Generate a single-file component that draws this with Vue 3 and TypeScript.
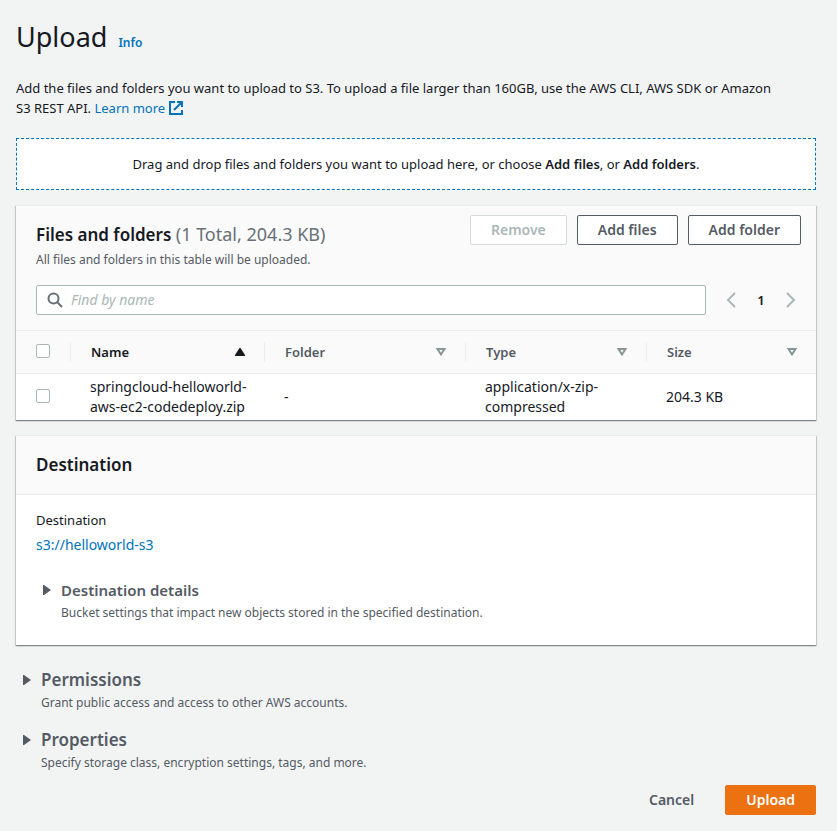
<script setup lang="ts">
import { computed, ref } from 'vue'

interface FileItem {
  name: string
  folder: string
  type: string
  size: string
}

interface Column {
  key: keyof FileItem
  label: string
}

const files: FileItem[] = [
  {
    name: 'springcloud-helloworld-aws-ec2-codedeploy.zip',
    folder: '-',
    type: 'application/x-zip-compressed',
    size: '204.3 KB',
  },
]

const columns: Column[] = [
  { key: 'name', label: 'Name' },
  { key: 'folder', label: 'Folder' },
  { key: 'type', label: 'Type' },
  { key: 'size', label: 'Size' },
]

const sections = [
  { title: 'Permissions', text: 'Grant public access and access to other AWS accounts.' },
  { title: 'Properties', text: 'Specify storage class, encryption settings, tags, and more.' },
]

const query = ref('')
const sortKey = ref<keyof FileItem>('name')
const selected = ref<string[]>([])

const visibleFiles = computed(() =>
  files
    .filter((f) => f.name.toLowerCase().includes(query.value.toLowerCase()))
    .sort((a, b) => a[sortKey.value].localeCompare(b[sortKey.value])),
)

function toggleAll(event: Event) {
  const checked = (event.target as HTMLInputElement).checked
  selected.value = checked ? files.map((f) => f.name) : []
}
</script>

<template>
  <main class="page">
    <header class="title-row">
      <h1>Upload</h1>
      <a class="info" href="#info">Info</a>
    </header>

    <p class="intro">
      Add the files and folders you want to upload to S3. To upload a file larger than 160GB, use the AWS CLI, AWS SDK or Amazon S3 REST API.
      <a class="link" href="#learn-more">Learn more
        <svg class="external" viewBox="0 0 14 14" aria-hidden="true">
          <path d="M6 1H1v12h12V9M8 1h5v5M13 1L5 9" />
        </svg></a>
    </p>

    <section class="dropzone">
      Drag and drop files and folders you want to upload here, or choose <b>Add files</b>, or <b>Add folders</b>.
    </section>

    <section class="card">
      <header class="card-head files-head">
        <div class="head-row">
          <div class="head-text">
            <h2>Files and folders <span class="counter">(1 Total, 204.3 KB)</span></h2>
            <p class="hint">All files and folders in this table will be uploaded.</p>
          </div>
          <div class="actions">
            <button class="btn" type="button" :disabled="!selected.length">Remove</button>
            <button class="btn" type="button">Add files</button>
            <button class="btn" type="button">Add folder</button>
          </div>
        </div>
        <div class="filter-row">
          <label class="search">
            <svg class="search-icon" viewBox="0 0 16 16" aria-hidden="true">
              <circle cx="6.5" cy="6.5" r="5" />
              <path d="M10 10L15 15" />
            </svg>
            <input v-model="query" type="text" placeholder="Find by name" aria-label="Find by name" />
          </label>
          <nav class="pager" aria-label="Pages">
            <button type="button" aria-label="Previous page">
              <svg viewBox="0 0 16 16"><path d="M12 1L5 8L12 15" /></svg>
            </button>
            <button class="current" type="button">1</button>
            <button type="button" aria-label="Next page">
              <svg viewBox="0 0 16 16"><path d="M4 1L11 8L4 15" /></svg>
            </button>
          </nav>
        </div>
      </header>

      <table>
        <colgroup>
          <col class="col-check" />
          <col class="col-name" />
          <col class="col-folder" />
          <col class="col-type" />
          <col />
        </colgroup>
        <thead>
          <tr>
            <th class="check">
              <input type="checkbox" aria-label="Select all files" :checked="selected.length === files.length" @change="toggleAll" />
            </th>
            <th v-for="col in columns" :key="col.key">
              <button class="sort" :class="{ active: sortKey === col.key }" type="button" @click="sortKey = col.key">
                {{ col.label }}
                <svg v-if="sortKey === col.key" class="sort-icon" viewBox="0 0 10 8" aria-hidden="true">
                  <path class="solid" d="M4.500 0h1L10 7v1H0V7z" />
                </svg>
                <svg v-else class="sort-icon" viewBox="0 0 10 8" aria-hidden="true">
                  <path class="hollow" d="M1.500 1h7L5 6.500z" />
                </svg>
              </button>
            </th>
          </tr>
        </thead>
        <tbody>
          <tr v-for="file in visibleFiles" :key="file.name">
            <td class="check">
              <input v-model="selected" type="checkbox" :value="file.name" :aria-label="`Select ${file.name}`" />
            </td>
            <td v-for="col in columns" :key="col.key">{{ file[col.key] }}</td>
          </tr>
        </tbody>
      </table>
    </section>

    <section class="card">
      <header class="card-head">
        <h2>Destination</h2>
      </header>
      <div class="card-body">
        <div class="field-label">Destination</div>
        <a class="link" href="#bucket">s3://helloworld-s3</a>
        <div class="expander nested">
          <button type="button" aria-expanded="false">
            <svg class="caret" viewBox="0 0 8 10" aria-hidden="true"><path d="M0 0h1L8 5L1 10H0z" /></svg>
            Destination details
          </button>
          <p class="hint">Bucket settings that impact new objects stored in the specified destination.</p>
        </div>
      </div>
    </section>

    <div class="sections">
      <div v-for="section in sections" :key="section.title" class="expander">
        <button type="button" aria-expanded="false">
          <svg class="caret" viewBox="0 0 8 10" aria-hidden="true"><path d="M0 0h1L8 5L1 10H0z" /></svg>
          {{ section.title }}
        </button>
        <p class="hint">{{ section.text }}</p>
      </div>
    </div>

    <footer class="footer">
      <button class="btn plain" type="button">Cancel</button>
      <button class="btn primary" type="button">Upload</button>
    </footer>
  </main>
</template>

<style>
body {
  margin: 0;
  background: #f2f3f3;
}
</style>

<style scoped>
.page {
  box-sizing: border-box;
  padding: 19px 21px 16px 16px;
  color: #16191f;
  font: 13px/20px "Noto Sans", "Open Sans", sans-serif;
}

h1,
h2,
p {
  margin: 0;
}

button {
  font: inherit;
  color: inherit;
  cursor: pointer;
}

.title-row {
  display: flex;
  align-items: baseline;
  gap: 11px;
  margin-bottom: 23px;
}

h1 {
  font-size: 27px;
  font-weight: 400;
  line-height: 36px;
}

.info {
  color: #0073bb;
  font-size: 12px;
  font-weight: 600;
  text-decoration: none;
}

.intro {
  padding-right: 36px;
}

.link {
  color: #0073bb;
  text-decoration: none;
}

.external {
  width: 14px;
  height: 14px;
  vertical-align: -2px;
  fill: none;
  stroke: currentColor;
  stroke-width: 2;
}

.dropzone {
  margin-top: 20px;
  padding: 15px;
  border: 1px dashed #0073bb;
  background: #fff;
  text-align: center;
}

b {
  font-weight: 600;
}

.card {
  margin-top: 15px;
  border-top: 1px solid #eaeded;
  background: #fff;
  box-shadow:
    0 1px 1px 0 rgba(0, 28, 36, 0.3),
    1px 1px 1px 0 rgba(0, 28, 36, 0.15),
    -1px 1px 1px 0 rgba(0, 28, 36, 0.15);
}

.card-head {
  padding: 18px 20px;
  border-bottom: 1px solid #eaeded;
  background: #fafafa;
}

h2 {
  font-size: 17px;
  font-weight: 600;
  line-height: 22px;
}

.files-head {
  padding: 9px 15px 15px 20px;
}

.head-row {
  display: flex;
  justify-content: space-between;
  gap: 20px;
}

.head-text {
  padding-top: 9px;
}

.counter {
  color: #687078;
  font-size: 18px;
  font-weight: 400;
  line-height: 20px;
}

.hint {
  color: #545b64;
  font-size: 12px;
  line-height: 16px;
}

.head-text .hint {
  margin-top: 6px;
}

.actions {
  display: flex;
  align-items: flex-start;
  gap: 10px;
}

.btn {
  padding: 4px 20px;
  border: 1px solid #545b64;
  border-radius: 2px;
  background: #fff;
  color: #545b64;
  font-size: 14px;
  font-weight: 600;
}

.btn:disabled {
  border-color: #d5dbdb;
  color: #aab7b8;
  cursor: default;
}

.filter-row {
  display: flex;
  align-items: center;
  gap: 15px;
  margin-top: 17px;
}

.search {
  display: flex;
  flex: 1;
  align-items: center;
  gap: 8px;
  padding: 4px 10px;
  border: 1px solid #aab7b8;
  border-radius: 2px;
  background: #fff;
}

.search-icon {
  width: 16px;
  height: 16px;
  fill: none;
  stroke: #687078;
  stroke-width: 2;
}

.search input {
  flex: 1;
  height: 20px;
  padding: 0;
  border: 0;
  outline: 0;
  background: none;
  color: inherit;
  font: inherit;
  font-size: 14px;
}

.search input::placeholder {
  color: #aab7b8;
  font-style: italic;
  opacity: 1;
}

.pager {
  display: flex;
  gap: 10px;
}

.pager button {
  display: grid;
  place-items: center;
  width: 20px;
  height: 20px;
  padding: 0;
  border: 0;
  background: none;
}

.pager .current {
  font-weight: 600;
}

.pager svg {
  width: 16px;
  height: 16px;
  fill: none;
  stroke: #aab7b8;
  stroke-width: 2;
}

table {
  width: 100%;
  border-collapse: collapse;
  table-layout: fixed;
}

.col-check {
  width: 54px;
}

.col-name {
  width: 194px;
}

.col-folder {
  width: 201px;
}

.col-type {
  width: 181px;
}

th {
  padding: 0;
  border-bottom: 1px solid #eaeded;
  background: #fafafa;
  text-align: left;
}

.sort {
  display: flex;
  align-items: center;
  justify-content: space-between;
  width: 100%;
  margin: 11px 0;
  padding: 0 19px 0 20px;
  border: 0;
  border-left: 1px solid #eaeded;
  background: none;
  color: #545b64;
  font-weight: 600;
}

.sort.active {
  color: #16191f;
}

.sort-icon {
  width: 10px;
  height: 8px;
  overflow: visible;
}

.solid {
  fill: #16191f;
}

.hollow {
  fill: none;
  stroke: #879596;
  stroke-width: 2;
}

td {
  padding: 3px 10px 3px 20px;
  font-size: 14px;
}

.check {
  padding: 0 0 2px 20px;
}

.check input {
  display: block;
  width: 14px;
  height: 14px;
  margin: 0;
  border: 1px solid #aab7b8;
  border-radius: 2px;
  background: #fff;
  appearance: none;
}

.check input:checked {
  border-color: #0073bb;
  background: #0073bb;
}

.card-body {
  padding: 15px 20px 24px;
}

.card-body .link {
  display: block;
  font-size: 14px;
}

.field-label {
  margin-bottom: 5px;
}

.expander button {
  display: flex;
  align-items: center;
  gap: 10px;
  padding: 0 0 0 7px;
  border: 0;
  background: none;
  color: #545b64;
  font-size: 17px;
  font-weight: 600;
  line-height: 22px;
}

.expander .hint {
  margin-top: 4px;
  padding-left: 25px;
}

.nested {
  margin-top: 24px;
}

.nested button {
  font-size: 15px;
}

.caret {
  width: 8px;
  height: 10px;
  fill: #545b64;
}

.sections {
  display: grid;
  gap: 18px;
  margin-top: 24px;
}

.footer {
  display: flex;
  justify-content: flex-end;
  gap: 10px;
  margin-top: 14px;
}

.plain {
  border-color: transparent;
  background: none;
}

.primary {
  border-color: #ec7211;
  background: #ec7211;
  color: #fff;
}
</style>
